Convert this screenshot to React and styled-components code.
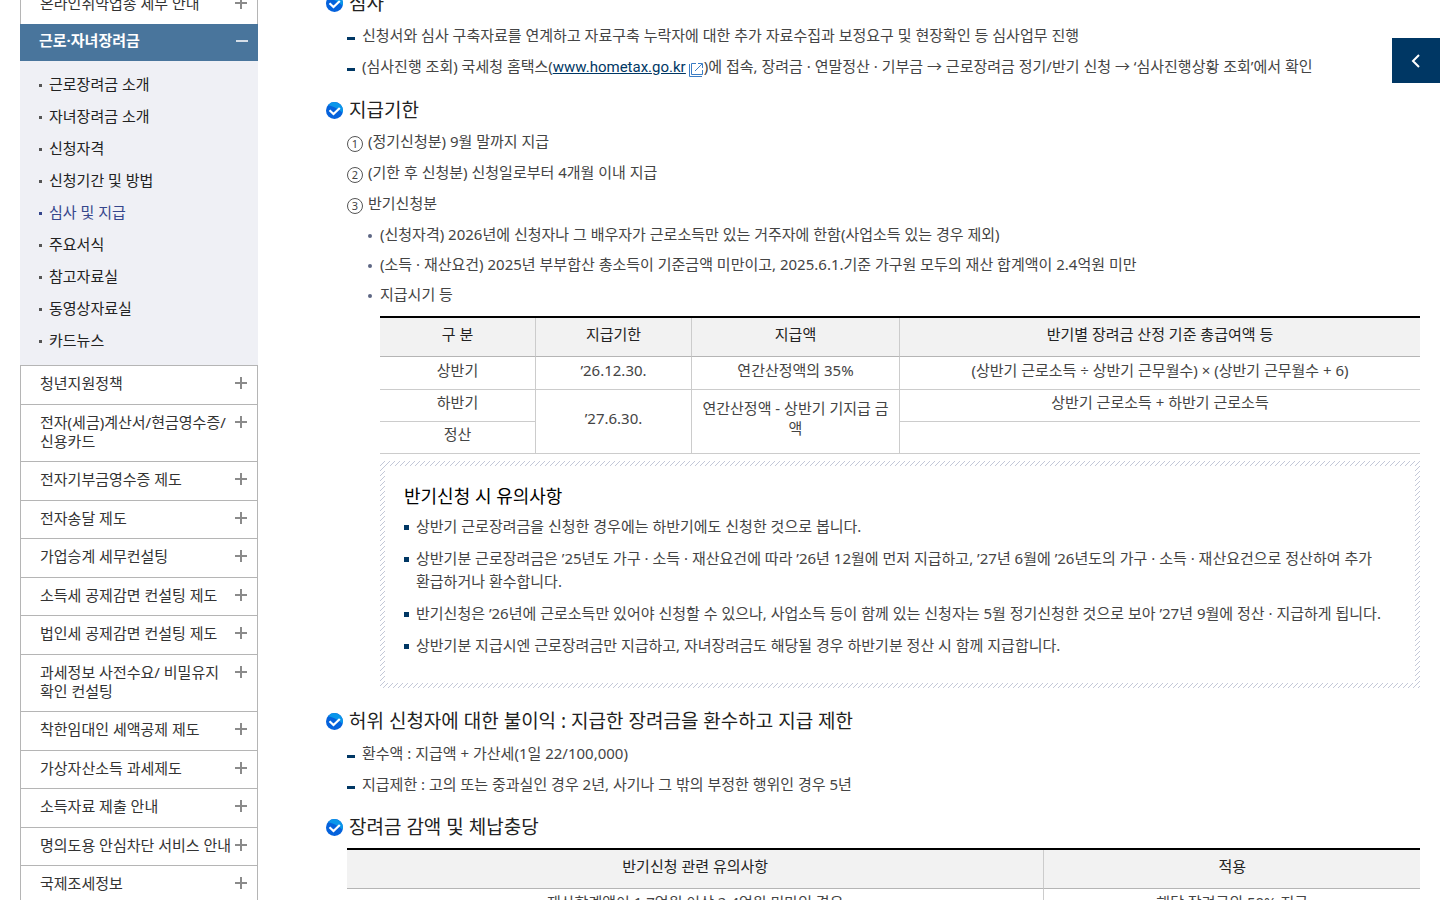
import styled, { createGlobalStyle, css } from "styled-components";

const subMenus = [
  "근로장려금 소개",
  "자녀장려금 소개",
  "신청자격",
  "신청기간 및 방법",
  "심사 및 지급",
  "주요서식",
  "참고자료실",
  "동영상자료실",
  "카드뉴스",
];

const menus = [
  "청년지원정책",
  "전자(세금)계산서/현금영수증/신용카드",
  "전자기부금영수증 제도",
  "전자송달 제도",
  "가업승계 세무컨설팅",
  "소득세 공제감면 컨설팅 제도",
  "법인세 공제감면 컨설팅 제도",
  "과세정보 사전수요/ 비밀유지 확인 컨설팅",
  "착한임대인 세액공제 제도",
  "가상자산소득 과세제도",
  "소득자료 제출 안내",
  "명의도용 안심차단 서비스 안내",
  "국제조세정보",
];

const notes = [
  "상반기 근로장려금을 신청한 경우에는 하반기에도 신청한 것으로 봅니다.",
  "상반기분 근로장려금은 ’25년도 가구 · 소득 · 재산요건에 따라 ’26년 12월에 먼저 지급하고, ’27년 6월에 ’26년도의 가구 · 소득 · 재산요건으로 정산하여 추가 환급하거나 환수합니다.",
  "반기신청은 ’26년에 근로소득만 있어야 신청할 수 있으나, 사업소득 등이 함께 있는 신청자는 5월 정기신청한 것으로 보아 ’27년 9월에 정산 · 지급하게 됩니다.",
  "상반기분 지급시엔 근로장려금만 지급하고, 자녀장려금도 해당될 경우 하반기분 정산 시 함께 지급합니다.",
];

const CheckIcon = () => (
  <svg width="17" height="17" viewBox="0 0 17 17" aria-hidden="true">
    <circle cx="8.5" cy="8.5" r="8.5" fill="#0562dc" />
    <path d="M2 3.2A8.5 8.5 0 0 1 17 8.5c0 .8-.1 1.5-.3 2.2C13.5 8 8 4 2 3.2z" fill="#0a96ea" />
    <path d="M3.5 8.2l4 3.8 6.3-6" fill="none" stroke="#fff" strokeWidth="2.2" />
  </svg>
);

const LinkIcon = () => (
  <svg width="14" height="14" viewBox="0 0 14 14" fill="none" stroke="#3a7cc4" aria-hidden="true">
    <path d="M.5 1v12.5H13" />
    <path d="M7 .5H2.5v11h11V7M6 8l7-7M9 .5h4.5V5" />
  </svg>
);

const PlusIcon = () => (
  <svg width="12" height="12" viewBox="0 0 12 12" stroke="#8b8b8b" strokeWidth="2" aria-hidden="true">
    <path d="M0 6h12M6 0v12" />
  </svg>
);

const MenuItem = ({ title }) => (
  <MenuRow>
    <MenuButton type="button">
      <span>{title}</span>
      <PlusIcon />
    </MenuButton>
  </MenuRow>
);

export default function App() {
  return (
    <>
      <GlobalStyle />
      <Page>
        <Sidebar aria-label="국세신고안내">
          <Menu>
            <MenuItem title="온라인취약업종 세무 안내" />
          </Menu>
          <OpenButton type="button" aria-expanded="true">
            <span>근로·자녀장려금</span>
            <svg width="12" height="2" aria-hidden="true">
              <rect width="12" height="2" fill="#d5dee8" />
            </svg>
          </OpenButton>
          <SubMenu>
            {subMenus.map((name) => (
              <SubItem key={name} $active={name === "심사 및 지급"}>
                <a href="#sub">{name}</a>
              </SubItem>
            ))}
          </SubMenu>
          <Menu>
            {menus.map((title) => (
              <MenuItem key={title} title={title} />
            ))}
          </Menu>
        </Sidebar>
        <Main>
          <Title>
            <CheckIcon />
            심사
          </Title>
          <DashList>
            <li>신청서와 심사 구축자료를 연계하고 자료구축 누락자에 대한 추가 자료수집과 보정요구 및 현장확인 등 심사업무 진행</li>
            <li>
              (심사진행 조회) 국세청 홈택스(
              <OutLink href="#hometax">
                <u>www.hometax.go.kr</u>
                <LinkIcon />
              </OutLink>
              )에 접속, 장려금 · 연말정산 · 기부금 → 근로장려금 정기/반기 신청 → ‘심사진행상황 조회’에서 확인
            </li>
          </DashList>
          <Title>
            <CheckIcon />
            지급기한
          </Title>
          <Steps>
            <li>
              <Num>1</Num>(정기신청분) 9월 말까지 지급
            </li>
            <li>
              <Num>2</Num>(기한 후 신청분) 신청일로부터 4개월 이내 지급
            </li>
            <li>
              <Num>3</Num>반기신청분
            </li>
          </Steps>
          <DotList>
            <li>(신청자격) 2026년에 신청자나 그 배우자가 근로소득만 있는 거주자에 한함(사업소득 있는 경우 제외)</li>
            <li>(소득 · 재산요건) 2025년 부부합산 총소득이 기준금액 미만이고, 2025.6.1.기준 가구원 모두의 재산 합계액이 2.4억원 미만</li>
            <li>지급시기 등</li>
          </DotList>
          <Inner>
            <Table>
              <colgroup>
                <Col $w={15} />
                <Col $w={15} />
                <Col $w={20} />
                <Col $w={50} />
              </colgroup>
              <thead>
                <tr>
                  <th scope="col">구 분</th>
                  <th scope="col">지급기한</th>
                  <th scope="col">지급액</th>
                  <th scope="col">반기별 장려금 산정 기준 총급여액 등</th>
                </tr>
              </thead>
              <tbody>
                <tr>
                  <td>상반기</td>
                  <td>’26.12.30.</td>
                  <td>연간산정액의 35%</td>
                  <td>(상반기 근로소득 ÷ 상반기 근무월수) × (상반기 근무월수 + 6)</td>
                </tr>
                <tr>
                  <td>하반기</td>
                  <td rowSpan="2">’27.6.30.</td>
                  <td rowSpan="2">연간산정액 - 상반기 기지급 금액</td>
                  <td>상반기 근로소득 + 하반기 근로소득</td>
                </tr>
                <tr>
                  <td>정산</td>
                  <td></td>
                </tr>
              </tbody>
            </Table>
            <NoteBox>
              <NoteBody>
                <h4>반기신청 시 유의사항</h4>
                <ul>
                  {notes.map((note) => (
                    <li key={note}>{note}</li>
                  ))}
                </ul>
              </NoteBody>
            </NoteBox>
          </Inner>
          <Title>
            <CheckIcon />
            허위 신청자에 대한 불이익 : 지급한 장려금을 환수하고 지급 제한
          </Title>
          <DashList>
            <li>환수액 : 지급액 + 가산세(1일 22/100,000)</li>
            <li>지급제한 : 고의 또는 중과실인 경우 2년, 사기나 그 밖의 부정한 행위인 경우 5년</li>
          </DashList>
          <Title>
            <CheckIcon />
            장려금 감액 및 체납충당
          </Title>
          <Wide>
            <Table>
              <colgroup>
                <Col $w={65} />
                <Col $w={35} />
              </colgroup>
              <thead>
                <tr>
                  <th scope="col">반기신청 관련 유의사항</th>
                  <th scope="col">적용</th>
                </tr>
              </thead>
              <tbody>
                <tr>
                  <td>재산합계액이 1.7억원 이상 2.4억원 미만인 경우</td>
                  <td>해당 장려금의 50% 지급</td>
                </tr>
              </tbody>
            </Table>
          </Wide>
        </Main>
        <QuickButton type="button" aria-label="퀵메뉴 열기">
          <svg width="10" height="16" viewBox="0 0 10 16" fill="none" stroke="#fff" strokeWidth="2" aria-hidden="true">
            <path d="M8 2L2 8l6 6" />
          </svg>
        </QuickButton>
      </Page>
    </>
  );
}

const GlobalStyle = createGlobalStyle`
  * {
    box-sizing: border-box;
  }
  body {
    margin: 0;
    background: #fff;
    color: #444;
    font-family: "Noto Sans", "Noto Sans CJK KR", sans-serif;
    font-size: 15px;
  }
  ul, ol {
    list-style: none;
    margin: 0;
    padding: 0;
  }
  button {
    font: inherit;
    cursor: pointer;
  }
`;

const Page = styled.div`
  display: flex;
  align-items: flex-start;
  gap: 68px;
  height: 100vh;
  padding: 0 20px;
  overflow: hidden;
`;

const Sidebar = styled.nav`
  flex: 0 0 238px;
  margin-top: -15px;
`;

const Menu = styled.ul`
  border: solid #b5b5b5;
  border-width: 0 1px;
`;

const rowButton = css`
  display: flex;
  justify-content: space-between;
  width: 100%;
  border: 0;
  text-align: left;
  line-height: 19px;
  word-break: keep-all;
  overflow-wrap: anywhere;
  svg {
    flex: none;
  }
`;

const MenuButton = styled.button`
  ${rowButton}
  align-items: flex-start;
  padding: 8px 10px 11px 19px;
  background: #fff;
  color: #333;
  svg {
    margin-top: 3px;
  }
`;

const MenuRow = styled.li`
  border-top: 1px solid #b5b5b5;
  &:nth-child(even) ${MenuButton} {
    padding-bottom: 10px;
  }
`;

const OpenButton = styled.button`
  ${rowButton}
  align-items: center;
  padding: 7px 10px 11px 19px;
  background: #49759c;
  color: #fff;
  font-weight: 700;
`;

const SubMenu = styled.ul`
  padding: 6px 0 10px;
  background: #eff0f5;
`;

const SubItem = styled.li`
  display: flex;
  align-items: center;
  height: 32px;
  padding-left: 19px;
  color: ${(props) => (props.$active ? "#35468c" : "#222")};
  &::before {
    content: "";
    width: 3px;
    height: 3px;
    margin: 4px 7px 0 0;
    background: ${(props) => (props.$active ? "#35468c" : "#555")};
  }
  a {
    color: inherit;
    text-decoration: none;
  }
`;

const Main = styled.main`
  flex: 1;
  min-width: 0;
  margin-top: -13px;
`;

const Title = styled.h3`
  display: flex;
  align-items: center;
  gap: 6px;
  margin: 0;
  color: #222;
  font-size: 19px;
  font-weight: 400;
  line-height: 32px;
`;

const DashList = styled.ul`
  padding: 1px 0 11px 21px;
  li {
    position: relative;
    padding-left: 15px;
    line-height: 31px;
  }
  li::before {
    content: "";
    position: absolute;
    top: 17px;
    left: 0;
    width: 8px;
    height: 3px;
    background: #003764;
  }
`;

const OutLink = styled.a`
  color: #003764;
  font-family: Roboto, sans-serif;
  svg {
    margin: 0 1px 0 3px;
    vertical-align: -5px;
  }
`;

const Steps = styled.ol`
  padding-left: 21px;
  li {
    display: flex;
    align-items: center;
    line-height: 31px;
  }
`;

const Num = styled.span`
  width: 16px;
  height: 16px;
  margin: 4px 5px 0 0;
  border: 1px solid #555;
  border-radius: 50%;
  font-size: 11px;
  line-height: 14px;
  text-align: center;
`;

const DotList = styled.ul`
  padding-left: 42px;
  li {
    display: flex;
    align-items: center;
    line-height: 30px;
  }
  li::before {
    content: "";
    width: 4px;
    height: 4px;
    margin: 4px 8px 0 0;
    border-radius: 50%;
    background: #5d6683;
  }
`;

const Inner = styled.div`
  padding: 7px 0 17px 54px;
`;

const Wide = styled.div`
  padding: 5px 0 0 21px;
`;

const Col = styled.col`
  width: ${(props) => props.$w}%;
`;

const Table = styled.table`
  width: 100%;
  border-collapse: separate;
  border-spacing: 0;
  border-top: 2px solid #000;
  table-layout: fixed;
  text-align: center;
  line-height: 20px;
  th {
    padding: 6px 8px 12px;
    border-bottom: 1px solid #b5b5b5;
    background: #f2f2f2;
    color: #222;
    font-weight: 400;
  }
  td {
    height: 32px;
    padding: 2px 8px 9px;
    border-bottom: 1px solid #ccc;
    word-break: break-all;
  }
  tbody tr:first-child td {
    height: 33px;
  }
  th:not(:last-child),
  td:not(:last-child) {
    border-right: 1px solid #ccc;
  }
`;

const NoteBox = styled.section`
  margin-top: 7px;
  padding: 5px;
  background: linear-gradient(135deg, transparent 42%, #c3c8d8 42%, #c3c8d8 58%, transparent 58%) 0 0 / 5px 5px;
`;

const NoteBody = styled.div`
  padding: 17px 19px 22px;
  background: #fff;
  word-break: keep-all;
  h4 {
    margin: 0;
    color: #000;
    font-size: 18px;
    font-weight: 400;
    line-height: 27px;
  }
  li {
    position: relative;
    padding: 5px 0 4px 12px;
    line-height: 23px;
  }
  li::before {
    content: "";
    position: absolute;
    top: 15px;
    left: 0;
    width: 5px;
    height: 5px;
    background: #003764;
  }
`;

const QuickButton = styled.button`
  position: fixed;
  top: 38px;
  right: 0;
  display: flex;
  align-items: center;
  justify-content: center;
  width: 48px;
  height: 45px;
  padding: 0;
  border: 0;
  background: #003764;
`;
